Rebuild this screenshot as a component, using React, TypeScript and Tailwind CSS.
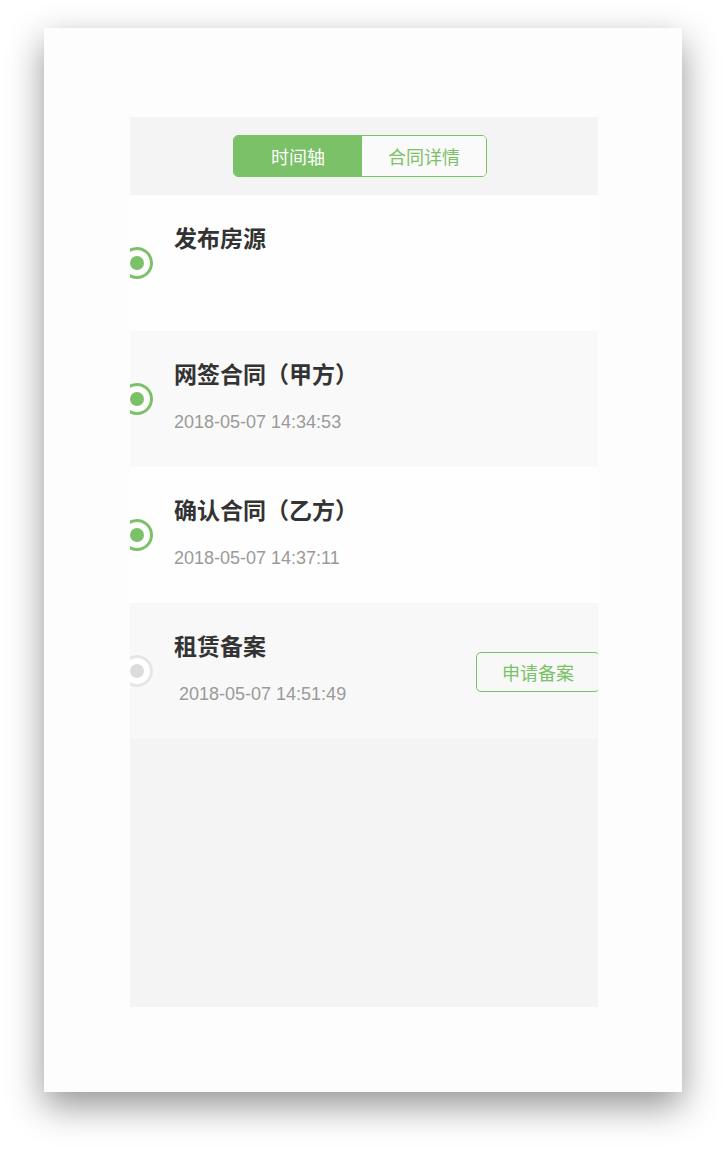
import React from "react";

const items = [
  { title: "发布房源", date: "", bg: "bg-[#fefefe]", done: true },
  { title: "网签合同（甲方）", date: "2018-05-07 14:34:53", bg: "bg-[#f9f9f9]", done: true },
  { title: "确认合同（乙方）", date: "2018-05-07 14:37:11", bg: "bg-[#fefefe]", done: true },
  { title: "租赁备案", date: "2018-05-07 14:51:49", bg: "bg-[#f8f8f8]", done: false, action: "申请备案" },
];

export default function App() {
  return (
    <div className="w-[728px] h-[1156px] bg-white pt-[28px] pl-[44px] font-['Noto_Sans_CJK_SC',sans-serif]">
      <div className="w-[638px] h-[1064px] bg-[#fdfdfd] shadow-[0_14px_34px_rgba(0,0,0,0.42)] pt-[89px] pl-[86px]">
        <div className="w-[468px] h-[890px] bg-[#f4f4f4] overflow-hidden flex flex-col">
          <div className="h-[78px] shrink-0 flex items-center pl-[103px]">
            <div className="flex h-[42px] w-[254px] rounded-[5px] border border-[#7ac168] overflow-hidden text-[18px]">
              <div className="w-[128px] bg-[#7ac168] text-white flex items-center justify-center">时间轴</div>
              <div className="flex-1 bg-[#fafafa] text-[#7ac168] flex items-center justify-center">合同详情</div>
            </div>
          </div>
          <div className="relative">
            <div className="absolute left-[4px] top-0 bottom-0 w-[2px] bg-[#e3e3e3]" />
            {items.map((it, i) => (
              <div key={i} className={`relative h-[136px] flex items-start pl-[44px] ${it.bg}`}>
                <div
                  className={`absolute left-[-9px] top-[52px] w-[32px] h-[32px] rounded-full border-[3px] bg-white flex items-center justify-center ${
                    it.done ? "border-[#7ac168]" : "border-[#e6e6e6]"
                  }`}
                >
                  <div className={`w-[14px] h-[14px] rounded-full ${it.done ? "bg-[#7ac168]" : "bg-[#dcdcdc]"}`} />
                </div>
                <div className="flex flex-col">
                  <div className="mt-[26px] text-[23px] leading-[32px] font-bold text-[#333]">{it.title}</div>
                  {it.date && (
                    <div
                      className={`mt-[21px] text-[18px] leading-[24px] text-[#9a9a9a] font-['Liberation_Sans',sans-serif] ${
                        it.action ? "pl-[5px]" : ""
                      }`}
                    >
                      {it.date}
                    </div>
                  )}
                </div>
                {it.action && (
                  <div className="ml-auto mr-[-2px] mt-[49px] w-[124px] h-[40px] rounded-[5px] border border-[#7ac168] text-[#7ac168] text-[18px] flex items-center justify-center">
                    {it.action}
                  </div>
                )}
              </div>
            ))}
          </div>
        </div>
      </div>
    </div>
  );
}
